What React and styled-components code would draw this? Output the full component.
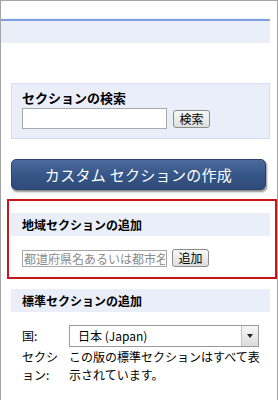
import styled, { createGlobalStyle } from 'styled-components';

const GlobalStyle = createGlobalStyle`
	body {
		margin: 0;
		background: #fff;
		font-family: "Noto Sans CJK JP", "Liberation Sans", sans-serif;
		font-size: 12px;
		color: #000;
	}
`;

const Frame = styled.div`
	width: 278px;
	height: 400px;
	box-sizing: border-box;
	border: 1px solid #a4a4a4;
	border-bottom: none;
	overflow: hidden;
	padding-top: 17px;
`;

const TopBar = styled.div`
	width: 269px;
	height: 21px;
	background: #eaeef9;
	border-top: 1px solid #f0f3fb;
	box-shadow: inset 0 2px 0 #7d9fe0;
	padding-top: 3px;
	box-sizing: content-box;
`;

const Panel = styled.div`
	margin: 40px 7px 0 10px;
	padding: 5px 10px 9px 10px;
	background: #eaeef9;
	border: 1px solid #d3dcf1;
`;

const PanelTitle = styled.div`
	font-weight: bold;
	font-size: 13px;
	line-height: 17px;
	margin-bottom: 2px;
`;

const Row = styled.div`
	display: flex;
	align-items: center;
	gap: ${(p) => p.gap || 6}px;
`;

const TextInput = styled.input`
	box-sizing: border-box;
	width: 145px;
	height: ${(p) => p.h || 21}px;
	margin: 0;
	padding: 0 1px;
	border: 1px solid #a8a8a8;
	background: #fff;
	font-family: "Noto Sans CJK JP", sans-serif;
	font-size: 12px;
	color: #000;
	&::placeholder {
		color: #8a8a8a;
	}
`;

const SmallButton = styled.button`
	box-sizing: border-box;
	height: 18px;
	width: 37px;
	padding: 0;
	border: 1px solid #8c8c8c;
	border-radius: 3px;
	background: linear-gradient(#f8f8f8, #dedede);
	font-family: "Noto Sans CJK JP", sans-serif;
	font-size: 12px;
	line-height: 16px;
	color: #000;
`;

const BigButton = styled.button`
	display: block;
	box-sizing: border-box;
	margin: 20px 0 0 10px;
	width: 255px;
	height: 31px;
	border: 1px solid #2a4270;
	border-radius: 5px;
	background: linear-gradient(#4b6a9e, #355586 55%, #2e4b7a);
	box-shadow: 1px 2px 2px rgba(0, 0, 0, 0.45);
	color: #fff;
	font-family: "Noto Sans CJK JP", sans-serif;
	font-size: 15px;
	letter-spacing: 0.3px;
	padding: 0;
`;

const Highlight = styled.div`
	margin: 9px 0 0 6px;
	border: 2px solid #c8171c;
	padding: 12px 5px 10px 2px;
`;

const Section = styled.div`
	margin: ${(p) => p.m || '0'};
`;

const SectionHead = styled.div`
	height: 23px;
	line-height: 23px;
	background: #eaeef9;
	padding-left: 11px;
	font-weight: bold;
	font-size: 12px;
`;

const SectionBody = styled.div`
	padding: ${(p) => p.pad || '13px 0 0 11px'};
`;

const FieldRow = styled.div`
	display: grid;
	grid-template-columns: 47px 1fr;
	align-items: ${(p) => p.align || 'center'};
	margin-bottom: ${(p) => p.mb || 0}px;
	line-height: 18px;
`;

const SelectBox = styled.div`
	box-sizing: border-box;
	display: flex;
	width: 190px;
	height: 22px;
	border: 1px solid #9a9a9a;
	background: #fff;
	& span {
		flex: 1;
		padding-left: 8px;
		line-height: 20px;
		font-size: 12px;
	}
`;

const Arrow = styled.div`
	width: 16px;
	border-left: 1px solid #c4c4c4;
	background: linear-gradient(#f6f6f6, #dcdcdc);
	display: flex;
	align-items: center;
	justify-content: center;
	&::after {
		content: '';
		border-left: 3px solid transparent;
		border-right: 3px solid transparent;
		border-top: 4px solid #222;
	}
`;

export default function App() {
	return (
		<>
			<GlobalStyle />
			<Frame>
				<TopBar />
				<Panel>
					<PanelTitle>セクションの検索</PanelTitle>
					<Row gap={6}>
						<TextInput />
						<SmallButton>検索</SmallButton>
					</Row>
				</Panel>
				<BigButton>カスタム セクションの作成</BigButton>
				<Highlight>
					<SectionHead>地域セクションの追加</SectionHead>
					<SectionBody pad="13px 0 0 11px">
						<Row gap={5}>
							<TextInput h={17} placeholder="都道府県名あるいは都市名" />
							<SmallButton>追加</SmallButton>
						</Row>
					</SectionBody>
				</Highlight>
				<Section m="10px 7px 0 10px">
					<SectionHead>標準セクションの追加</SectionHead>
					<SectionBody pad="13px 0 0 11px">
						<FieldRow mb={1}>
							<span>国:</span>
							<SelectBox>
								<span>日本 (Japan)</span>
								<Arrow />
							</SelectBox>
						</FieldRow>
						<FieldRow align="start">
							<span>セクション:</span>
							<span>この版の標準セクションはすべて表示されています。</span>
						</FieldRow>
					</SectionBody>
				</Section>
			</Frame>
		</>
	);
}
